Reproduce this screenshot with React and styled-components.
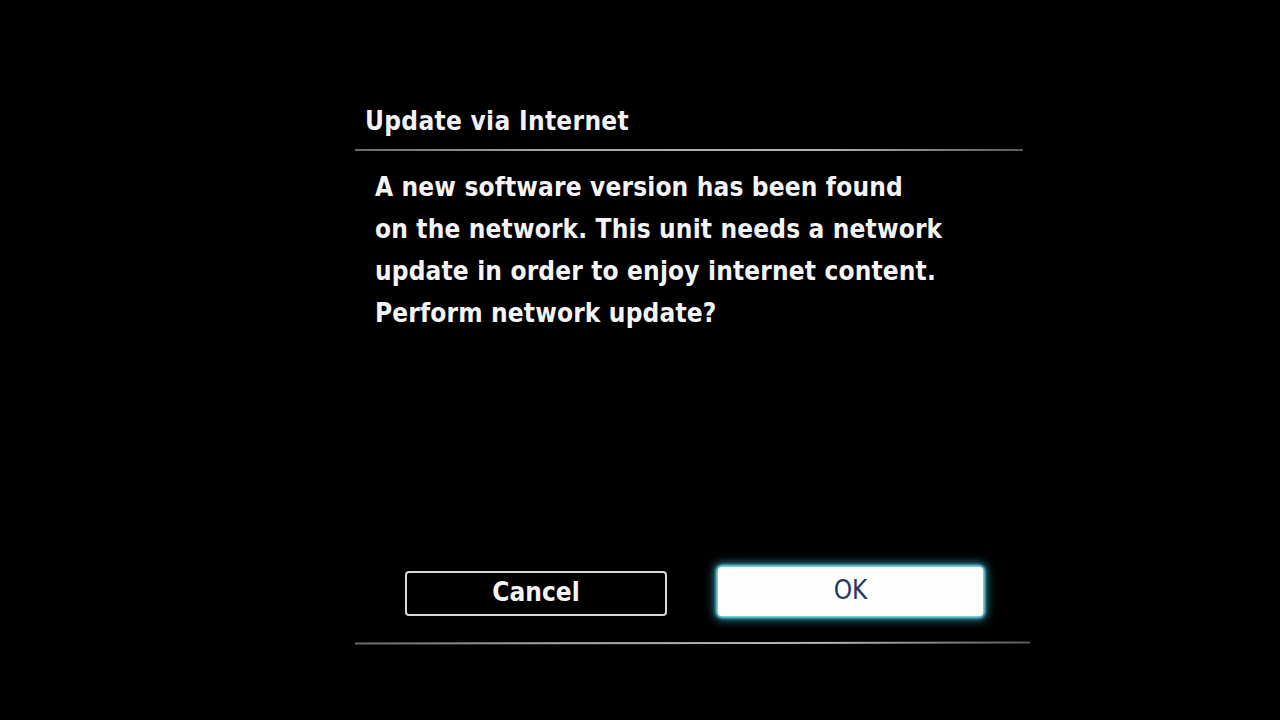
import React from "react";
import styled, { createGlobalStyle } from "styled-components";

const Global = createGlobalStyle`
  html, body { margin: 0; padding: 0; background: #000; }
  body { width: 1280px; height: 720px; overflow: hidden; font-family: "DejaVu Sans Condensed", "DejaVu Sans", sans-serif; }
`;

const Screen = styled.div`
  width: 1280px;
  height: 720px;
  background: #000;
  display: flex;
  flex-direction: column;
  padding: 100px 0 0 355px;
  box-sizing: border-box;
`;

const Dialog = styled.div`
  width: 672px;
  display: flex;
  flex-direction: column;
`;

const Title = styled.div`
  color: #f2f2f6;
  font-size: 26px;
  font-weight: 600;
  line-height: 42px;
  padding-left: 10px;
  height: 49px;
  letter-spacing: 0.3px;
`;

const Divider = styled.div`
  height: 2px;
  width: ${(p) => p.$w || 668}px;
  background: linear-gradient(90deg, #6a6a6a 0%, #a8a8a8 30%, #b4b4b4 70%, #5a5a5a 100%);
`;

const Body = styled.div`
  color: #f4f4f6;
  font-size: 26px;
  font-weight: 600;
  line-height: 42px;
  padding: 15px 0 0 20px;
  letter-spacing: 0.15px;
`;

const Line = styled.div`
  white-space: nowrap;
`;

const ButtonRow = styled.div`
  display: flex;
  align-items: center;
  gap: 51px;
  padding-left: 50px;
  margin-top: 232px;
  height: 52px;
`;

const Button = styled.div`
  display: flex;
  align-items: center;
  justify-content: center;
  box-sizing: border-box;
  width: ${(p) => (p.$focused ? 265 : 262)}px;
  height: ${(p) => (p.$focused ? 49 : 45)}px;
  border-radius: 4px;
  font-size: 26px;
  font-family: "DejaVu Sans Condensed", "DejaVu Sans", sans-serif;
  font-weight: ${(p) => (p.$focused ? 400 : 600)};
  color: ${(p) => (p.$focused ? "#2a3560" : "#f4f4f6")};
  background: ${(p) => (p.$focused ? "#fdfdfd" : "#000")};
  border: ${(p) => (p.$focused ? "none" : "2px solid #d8d8dc")};
  box-shadow: ${(p) =>
    p.$focused ? "0 0 3px 2px #7fe3f0, 0 0 10px 4px rgba(60,200,230,0.6)" : "none"};
  padding-bottom: 4px;
  margin-top: ${(p) => (p.$focused ? "-1px" : "3px")};
`;

const BottomDivider = styled(Divider)`
  margin-top: 24px;
  transform: rotate(-0.1deg);
`;

export default function App() {
  return (
    <>
      <Global />
      <Screen>
        <Dialog>
          <Title>Update via Internet</Title>
          <Divider $w={668} />
          <Body>
            <Line>A new software version has been found</Line>
            <Line>on the network. This unit needs a network</Line>
            <Line>update in order to enjoy internet content.</Line>
            <Line>Perform network update?</Line>
          </Body>
          <ButtonRow>
            <Button>Cancel</Button>
            <Button $focused>OK</Button>
          </ButtonRow>
          <BottomDivider $w={675} />
        </Dialog>
      </Screen>
    </>
  );
}
